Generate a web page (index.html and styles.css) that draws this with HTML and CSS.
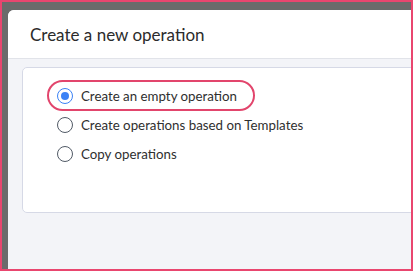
FILE: index.html
```html
<!DOCTYPE html>
<html>
<head>
  <title>Create a new operation</title>
  <link rel="stylesheet" href="styles.css">
</head>
<body>
  <div class="frame">
    <div class="dialog">
      <!-- Header -->
      <div class="dialog-header">Create a new operation</div>

      <!-- Body -->
      <div class="dialog-body">
        <div class="card">
          <label class="option selected">
            <span class="radio checked"></span>
            <span class="option-text">Create an empty operation</span>
          </label>
          <label class="option">
            <span class="radio"></span>
            <span class="option-text">Create operations based on Templates</span>
          </label>
          <label class="option">
            <span class="radio"></span>
            <span class="option-text">Copy operations</span>
          </label>
        </div>
      </div>
    </div>
  </div>
</body>
</html>
```

FILE: styles.css
```css
/* Base */
html, body {
  margin: 0;
  padding: 0;
  height: 100%;
  overflow: hidden;
  font-family: 'Lato', 'Open Sans', sans-serif;
}

.frame {
  height: 100%;
  box-sizing: border-box;
  border: 2px solid #e9466f;
  background: #6b6b6b;
  padding: 8px 0 0 6px;
  overflow: hidden;
}

/* Dialog */
.dialog {
  height: 100%;
  display: flex;
  flex-direction: column;
  background: #f3f4f8;
  border-top-left-radius: 6px;
  overflow: hidden;
}

.dialog-header {
  height: 48px;
  flex-shrink: 0;
  display: flex;
  align-items: center;
  padding-left: 22px;
  background: #fff;
  border-bottom: 1px solid #e1e3e9;
  color: #2b2b2b;
  font-size: 17px;
}

.dialog-body {
  padding: 8px 0 0 14px;
}

.card {
  height: 146px;
  box-sizing: border-box;
  margin-right: -12px;
  background: #fff;
  border: 1px solid #d6d9e6;
  border-radius: 5px;
  padding: 12px 0 0 24px;
  display: flex;
  flex-direction: column;
  align-items: flex-start;
}

/* Radio options */
.option {
  height: 29px;
  box-sizing: border-box;
  display: inline-flex;
  align-items: center;
  gap: 8px;
  padding: 0 16px 0 8px;
  border: 2px solid transparent;
  border-radius: 16px;
  color: #2f2f2f;
  font-size: 13.3px;
  cursor: pointer;
}

.option.selected {
  height: 31px;
  margin-bottom: -1px;
  border-color: #e2456c;
}

.radio {
  width: 16px;
  height: 16px;
  box-sizing: border-box;
  border: 1.6px solid #515a66;
  border-radius: 50%;
  display: flex;
  align-items: center;
  justify-content: center;
}

.radio.checked {
  border-color: #3b82f6;
}

.radio.checked:after {
  content: "";
  width: 8px;
  height: 8px;
  border-radius: 50%;
  background: #3b82f6;
}
```
